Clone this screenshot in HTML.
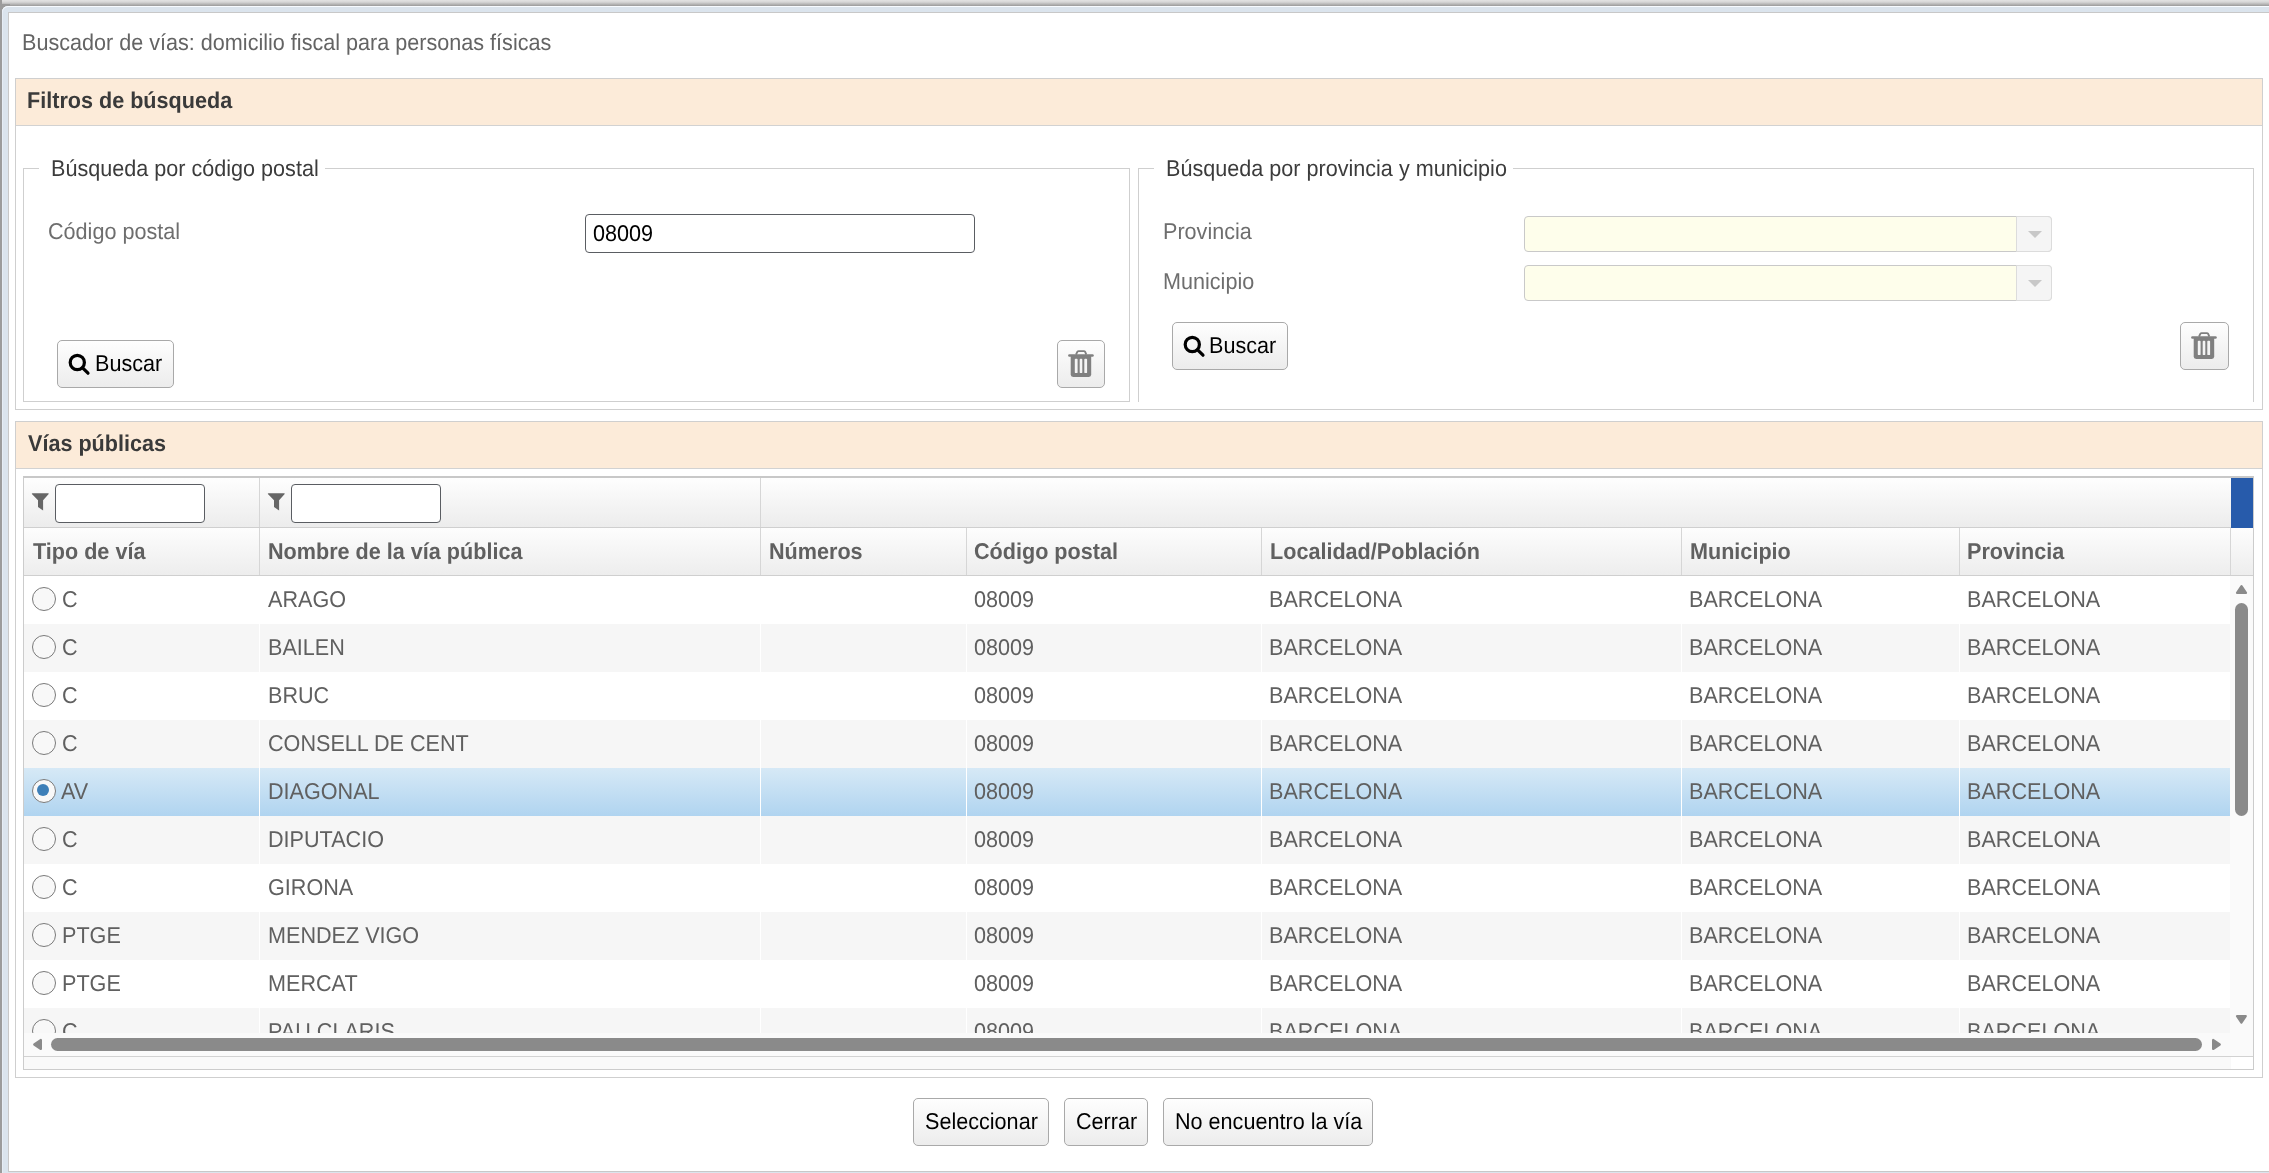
<!DOCTYPE html>
<html><head><meta charset="utf-8">
<style>
*{box-sizing:border-box;margin:0;padding:0}
html,body{width:2269px;height:1173px;overflow:hidden;background:#fff}
body{position:relative;font-family:"Liberation Sans",sans-serif;font-size:21.6px;line-height:24px;color:#555}
.a{position:absolute}
.t,.hd,.row .c{text-rendering:geometricPrecision;transform-origin:0 19.5px;transform:scaleY(1.06)}
.t{position:absolute;white-space:nowrap;line-height:24px}
.bgtop{left:0;top:0;width:2269px;height:6px;background:linear-gradient(#e3e3e3 0,#d6d6d6 35%,#9a9a9a 100%)}
.bgleft{left:0;top:0;width:2px;height:1173px;background:#9c9c9c}
.frame{left:2px;top:6px;width:2300px;height:1180px;background:#dbe4ed;border-top-left-radius:6px;box-shadow:inset 0 1px 0 #f7fbff,inset 1px 0 0 #e6edf5}
.inner{left:8px;top:12px;width:2300px;height:1160px;border:1px solid #c8c8c8;background:#fff}
.panel{border:1px solid #cfcfcf;background:#fff}
.phead{position:absolute;left:0;top:0;right:0;height:47px;background:#fcebd9;border-bottom:1px solid #d2d2d2}
.ptitle{font-weight:bold;color:#3a3a3a}
.fs{border:1px solid #cfcfcf}
.legend{color:#3c3c3c}
.lbl{color:#6e6e6e}
.btn{border:1px solid #a9a9a9;border-radius:5px;background:linear-gradient(#fefefe,#ececec)}
.btxt{color:#000}
.inp{border:1px solid #5a5d62;border-radius:4px;background:#fff}
.sel1{border:1px solid #c9c9c9;border-radius:4px;background:#fefeeb}
.sel1 .dd{position:absolute;right:-1px;top:-1px;bottom:-1px;width:36px;border-radius:0 4px 4px 0;background:#f5f5f5;border:1px solid #dcdcdc}
.sel1 .dd:after{content:"";position:absolute;left:10.5px;top:13.5px;border-left:7px solid transparent;border-right:7px solid transparent;border-top:7px solid #c8c8c8}
.grid{left:23px;top:476px;width:2231px;height:594px;border:1px solid #cccccc;border-top:2px solid #c8c8c8;background:#fff;overflow:hidden}
.frow{position:absolute;left:0;top:0;width:2229px;height:50px;background:linear-gradient(#fefefe,#ececec);border-bottom:1px solid #cfcfcf}
.hrow{position:absolute;left:0;top:50px;width:2229px;height:48px;background:linear-gradient(#fdfdfd,#ededed);border-bottom:1px solid #cfcfcf}
.vsep{position:absolute;top:0;bottom:0;width:1px;background:#d6d6d6}
.hd{position:absolute;top:12px;font-weight:bold;color:#606060;white-space:nowrap;line-height:24px}
.body{position:absolute;left:0;top:98px;width:2206px;height:457px;overflow:hidden}
.row{position:absolute;left:0;width:2206px;height:48px;background:#fff}
.row.even{background:#f6f6f6}
.row.sel{background:linear-gradient(#d6e9f6,#b0d4f0)}
.row .c{position:absolute;top:12px;white-space:nowrap;line-height:24px;color:#606060}
.csep{position:absolute;top:0;height:457px;width:1px;background:#fff}
.radio{position:absolute;left:8px;top:11px;width:24px;height:24px;border-radius:50%;border:1px solid #7a7a7a;background:#f8f8f8}
.radio i{position:absolute;left:4px;top:4px;width:12px;height:12px;border-radius:50%;background:#3d7fb8}
.fin{position:absolute;top:6px;width:150px;height:39px;border:1px solid #5a5d62;border-radius:4px;background:#fff}
</style></head><body>
<div id="root" style="position:absolute;left:0;top:0;width:2269px;height:1173px;will-change:transform">
<div class="a bgtop"></div>
<div class="a bgleft"></div>
<div class="a" style="left:0;top:4px;width:10px;height:10px;background:#9c9c9c"></div>
<div class="a frame"></div>
<div class="a inner"></div>

<div class="t" style="left:22px;top:31px;color:#646464">Buscador de vías: domicilio fiscal para personas físicas</div>

<!-- Panel 1 -->
<div class="a panel" style="left:15px;top:78px;width:2248px;height:332px">
  <div class="phead"></div>
</div>
<div class="t ptitle" style="left:27px;top:89px">Filtros de búsqueda</div>

<!-- Fieldset 1 -->
<div class="a fs" style="left:23px;top:168px;width:1107px;height:234px"></div>
<div class="a" style="left:39px;top:160px;width:286px;height:16px;background:#fff"></div>
<div class="t legend" style="left:51px;top:157px">Búsqueda por código postal</div>
<div class="t lbl" style="left:48px;top:220px">Código postal</div>
<div class="a inp" style="left:585px;top:214px;width:390px;height:39px"></div>
<div class="t" style="left:593px;top:222px;color:#000">08009</div>
<div class="a btn" style="left:57px;top:340px;width:117px;height:48px"></div>
<svg class="a" style="left:68px;top:353px" width="24" height="24" viewBox="0 0 24 24"><circle cx="9.3" cy="9.5" r="7.1" fill="none" stroke="#000" stroke-width="3.2"/><line x1="14.6" y1="14.8" x2="20" y2="20.2" stroke="#000" stroke-width="3.2" stroke-linecap="round"/></svg>
<div class="t btxt" style="left:95px;top:352px">Buscar</div>
<div class="a btn" style="left:1057px;top:340px;width:48px;height:48px"></div>
<svg class="a" style="left:1057px;top:340px" width="48" height="48" viewBox="0 0 48 48"><path d="M19 14.6 L20.4 11.7 Q20.8 11.1 21.6 11.1 L26.9 11.1 Q27.7 11.1 28.1 11.7 L29.3 14.6" fill="none" stroke="#808080" stroke-width="1.9"/><line x1="12.4" y1="15.4" x2="35.5" y2="15.4" stroke="#808080" stroke-width="2.5" stroke-linecap="round"/><path d="M13.7 16 L34.2 16 L34.2 34.6 Q34.2 37 31.8 37 L16.1 37 Q13.7 37 13.7 34.6 Z" fill="#808080"/><rect x="17.8" y="18.8" width="2.8" height="14.3" rx="0.9" fill="#f4f4f4"/><rect x="22.7" y="18.8" width="2.6" height="14.3" rx="0.9" fill="#f4f4f4"/><rect x="27.3" y="18.8" width="2.8" height="14.3" rx="0.9" fill="#f4f4f4"/></svg>

<!-- Fieldset 2 -->
<div class="a fs" style="left:1138px;top:168px;width:1116px;height:234px;border-bottom:none"></div>
<div class="a" style="left:1154px;top:160px;width:359px;height:16px;background:#fff"></div>
<div class="t legend" style="left:1166px;top:157px">Búsqueda por provincia y municipio</div>
<div class="t lbl" style="left:1163px;top:220px">Provincia</div>
<div class="t lbl" style="left:1163px;top:270px">Municipio</div>
<div class="a sel1" style="left:1524px;top:216px;width:528px;height:36px"><div class="dd"></div></div>
<div class="a sel1" style="left:1524px;top:265px;width:528px;height:36px"><div class="dd"></div></div>
<div class="a btn" style="left:1172px;top:322px;width:116px;height:48px"></div>
<svg class="a" style="left:1183px;top:335px" width="24" height="24" viewBox="0 0 24 24"><circle cx="9.3" cy="9.5" r="7.1" fill="none" stroke="#000" stroke-width="3.2"/><line x1="14.6" y1="14.8" x2="20" y2="20.2" stroke="#000" stroke-width="3.2" stroke-linecap="round"/></svg>
<div class="t btxt" style="left:1209px;top:334px">Buscar</div>
<div class="a btn" style="left:2180px;top:322px;width:49px;height:48px"></div>
<svg class="a" style="left:2180px;top:322px" width="48" height="48" viewBox="0 0 48 48"><path d="M19 14.6 L20.4 11.7 Q20.8 11.1 21.6 11.1 L26.9 11.1 Q27.7 11.1 28.1 11.7 L29.3 14.6" fill="none" stroke="#808080" stroke-width="1.9"/><line x1="12.4" y1="15.4" x2="35.5" y2="15.4" stroke="#808080" stroke-width="2.5" stroke-linecap="round"/><path d="M13.7 16 L34.2 16 L34.2 34.6 Q34.2 37 31.8 37 L16.1 37 Q13.7 37 13.7 34.6 Z" fill="#808080"/><rect x="17.8" y="18.8" width="2.8" height="14.3" rx="0.9" fill="#f4f4f4"/><rect x="22.7" y="18.8" width="2.6" height="14.3" rx="0.9" fill="#f4f4f4"/><rect x="27.3" y="18.8" width="2.8" height="14.3" rx="0.9" fill="#f4f4f4"/></svg>

<!-- Panel 2 -->
<div class="a panel" style="left:15px;top:421px;width:2248px;height:657px">
  <div class="phead"></div>
</div>
<div class="t ptitle" style="left:28px;top:432px">Vías públicas</div>

<div class="a grid">
  <div class="frow">
    <div class="vsep" style="left:235px"></div>
    <div class="vsep" style="left:736px"></div>
    <svg class="a" style="left:7px;top:15px" width="20" height="20" viewBox="0 0 20 20"><path d="M0.9 1.1 Q0.5 0.3 1.4 0.3 L17.2 0.3 Q18.1 0.3 17.7 1.1 L12.1 7.2 L12.1 17.5 L7 14.1 L7 7.2 Z" fill="#666"/></svg>
    <div class="fin" style="left:31px"></div>
    <svg class="a" style="left:243px;top:15px" width="20" height="20" viewBox="0 0 20 20"><path d="M0.9 1.1 Q0.5 0.3 1.4 0.3 L17.2 0.3 Q18.1 0.3 17.7 1.1 L12.1 7.2 L12.1 17.5 L7 14.1 L7 7.2 Z" fill="#666"/></svg>
    <div class="fin" style="left:267px"></div>
  </div>
  <div class="a" style="left:2207px;top:0;width:22px;height:50px;background:#275bab"></div>
  <div class="hrow">
    <div class="vsep" style="left:235px"></div>
    <div class="vsep" style="left:736px"></div>
    <div class="vsep" style="left:942px"></div>
    <div class="vsep" style="left:1237px"></div>
    <div class="vsep" style="left:1657px"></div>
    <div class="vsep" style="left:1935px"></div>
    <div class="vsep" style="left:2206px"></div>
    <div class="hd" style="left:9px">Tipo de vía</div>
    <div class="hd" style="left:244px">Nombre de la vía pública</div>
    <div class="hd" style="left:745px">Números</div>
    <div class="hd" style="left:950px">Código postal</div>
    <div class="hd" style="left:1246px">Localidad/Población</div>
    <div class="hd" style="left:1666px">Municipio</div>
    <div class="hd" style="left:1943px">Provincia</div>
  </div>
  <div class="body">
<div class="row" style="top:0px"><span class="radio"></span><span class="c" style="left:38px">C</span><span class="c" style="left:244px">ARAGO</span><span class="c" style="left:950px">08009</span><span class="c" style="left:1245px">BARCELONA</span><span class="c" style="left:1665px">BARCELONA</span><span class="c" style="left:1943px">BARCELONA</span></div>
<div class="row even" style="top:48px"><span class="radio"></span><span class="c" style="left:38px">C</span><span class="c" style="left:244px">BAILEN</span><span class="c" style="left:950px">08009</span><span class="c" style="left:1245px">BARCELONA</span><span class="c" style="left:1665px">BARCELONA</span><span class="c" style="left:1943px">BARCELONA</span></div>
<div class="row" style="top:96px"><span class="radio"></span><span class="c" style="left:38px">C</span><span class="c" style="left:244px">BRUC</span><span class="c" style="left:950px">08009</span><span class="c" style="left:1245px">BARCELONA</span><span class="c" style="left:1665px">BARCELONA</span><span class="c" style="left:1943px">BARCELONA</span></div>
<div class="row even" style="top:144px"><span class="radio"></span><span class="c" style="left:38px">C</span><span class="c" style="left:244px">CONSELL DE CENT</span><span class="c" style="left:950px">08009</span><span class="c" style="left:1245px">BARCELONA</span><span class="c" style="left:1665px">BARCELONA</span><span class="c" style="left:1943px">BARCELONA</span></div>
<div class="row sel" style="top:192px"><span class="radio on"><i></i></span><span class="c" style="left:37px">AV</span><span class="c" style="left:244px">DIAGONAL</span><span class="c" style="left:950px">08009</span><span class="c" style="left:1245px">BARCELONA</span><span class="c" style="left:1665px">BARCELONA</span><span class="c" style="left:1943px">BARCELONA</span></div>
<div class="row even" style="top:240px"><span class="radio"></span><span class="c" style="left:38px">C</span><span class="c" style="left:244px">DIPUTACIO</span><span class="c" style="left:950px">08009</span><span class="c" style="left:1245px">BARCELONA</span><span class="c" style="left:1665px">BARCELONA</span><span class="c" style="left:1943px">BARCELONA</span></div>
<div class="row" style="top:288px"><span class="radio"></span><span class="c" style="left:38px">C</span><span class="c" style="left:244px">GIRONA</span><span class="c" style="left:950px">08009</span><span class="c" style="left:1245px">BARCELONA</span><span class="c" style="left:1665px">BARCELONA</span><span class="c" style="left:1943px">BARCELONA</span></div>
<div class="row even" style="top:336px"><span class="radio"></span><span class="c" style="left:38px">PTGE</span><span class="c" style="left:244px">MENDEZ VIGO</span><span class="c" style="left:950px">08009</span><span class="c" style="left:1245px">BARCELONA</span><span class="c" style="left:1665px">BARCELONA</span><span class="c" style="left:1943px">BARCELONA</span></div>
<div class="row" style="top:384px"><span class="radio"></span><span class="c" style="left:38px">PTGE</span><span class="c" style="left:244px">MERCAT</span><span class="c" style="left:950px">08009</span><span class="c" style="left:1245px">BARCELONA</span><span class="c" style="left:1665px">BARCELONA</span><span class="c" style="left:1943px">BARCELONA</span></div>
<div class="row even" style="top:432px"><span class="radio"></span><span class="c" style="left:38px">C</span><span class="c" style="left:244px">PAU CLARIS</span><span class="c" style="left:950px">08009</span><span class="c" style="left:1245px">BARCELONA</span><span class="c" style="left:1665px">BARCELONA</span><span class="c" style="left:1943px">BARCELONA</span></div>
    <div class="csep" style="left:235px"></div>
    <div class="csep" style="left:736px"></div>
    <div class="csep" style="left:942px"></div>
    <div class="csep" style="left:1237px"></div>
    <div class="csep" style="left:1657px"></div>
    <div class="csep" style="left:1935px"></div>
  </div>
  <!-- vertical scrollbar -->
  <div class="a" style="left:2206px;top:98px;width:23px;height:457px;background:#fafafa"></div>
  <svg class="a" style="left:2206px;top:98px" width="23" height="457" viewBox="0 0 23 457">
    <path d="M7 16.9 L16 16.9 L11.5 10.2 Z" fill="#8a8a8a" stroke="#8a8a8a" stroke-width="2.2" stroke-linejoin="round"/>
    <rect x="5" y="27" width="13" height="213" rx="6.5" fill="#8a8a8a"/>
    <path d="M7 440.1 L15.8 440.1 L11.4 446.6 Z" fill="#8a8a8a" stroke="#8a8a8a" stroke-width="2.2" stroke-linejoin="round"/>
  </svg>
  <!-- horizontal scrollbar -->
  <div class="a" style="left:0;top:555px;width:2229px;height:24px;background:#fafafa;border-bottom:1px solid #d2d2d2"></div>
  <svg class="a" style="left:0;top:555px" width="2229" height="23" viewBox="0 0 2229 23">
    <path d="M16.9 7 L16.9 16 L10.2 11.5 Z" fill="#8a8a8a" stroke="#8a8a8a" stroke-width="2.2" stroke-linejoin="round"/>
    <rect x="27" y="5" width="2151" height="13" rx="6.5" fill="#8a8a8a"/>
    <path d="M2189.1 7 L2189.1 16 L2195.8 11.5 Z" fill="#8a8a8a" stroke="#8a8a8a" stroke-width="2.2" stroke-linejoin="round"/>
  </svg>
  <div class="a" style="left:0;top:579px;width:2207px;height:12px;background:#f9f9f9"></div>
</div>

<!-- bottom buttons -->
<div class="a btn" style="left:913px;top:1098px;width:136px;height:48px"></div>
<div class="t btxt" style="left:925px;top:1110px">Seleccionar</div>
<div class="a btn" style="left:1064px;top:1098px;width:84px;height:48px"></div>
<div class="t btxt" style="left:1076px;top:1110px">Cerrar</div>
<div class="a btn" style="left:1163px;top:1098px;width:210px;height:48px"></div>
<div class="t btxt" style="left:1175px;top:1110px">No encuentro la vía</div>

</div>
</body></html>
